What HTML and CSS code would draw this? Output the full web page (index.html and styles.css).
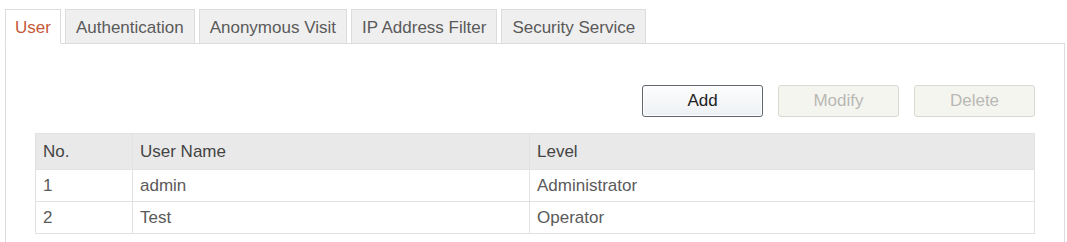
FILE: index.html
```html
<!DOCTYPE html>
<html lang="en">
<head>
  <meta charset="UTF-8" />
  <title>User Management</title>
  <link rel="stylesheet" href="styles.css">
</head>
<body>
  <div class="tabs">
    <div class="tab active">User</div>
    <div class="tab">Authentication</div>
    <div class="tab">Anonymous Visit</div>
    <div class="tab">IP Address Filter</div>
    <div class="tab">Security Service</div>
  </div>
  <div class="panel">
    <div class="toolbar">
      <button class="btn">Add</button>
      <button class="btn" disabled>Modify</button>
      <button class="btn" disabled>Delete</button>
    </div>
    <table class="users">
      <thead>
        <tr><th class="col-no">No.</th><th class="col-name">User Name</th><th>Level</th></tr>
      </thead>
      <tbody>
        <tr><td>1</td><td>admin</td><td>Administrator</td></tr>
        <tr><td>2</td><td>Test</td><td>Operator</td></tr>
      </tbody>
    </table>
  </div>
</body>
</html>
```

FILE: styles.css
```css
html, body {
  margin: 0;
  padding: 0;
  background: #fff;
  font-family: "Liberation Sans", Arial, sans-serif;
  font-size: 17px;
  color: #555;
  overflow: hidden;
}
.tabs {
  display: flex;
  gap: 4px;
  padding: 9px 0 0 5px;
  position: relative;
  z-index: 1;
}
.tab {
  height: 33px;
  line-height: 35px;
  padding: 0 10px;
  background: #efefef;
  border: 1px solid #dcdcdc;
  color: #5a5a5a;
  margin-bottom: -1px;
}
.tab.active {
  background: #fff;
  border-bottom-color: #fff;
  color: #c4583a;
  padding: 0 9px;
}
.panel {
  margin-left: 5px;
  width: 1058px;
  height: 200px;
  border: 1px solid #dcdcdc;
}
.toolbar {
  display: flex;
  justify-content: flex-end;
  gap: 15px;
  padding: 41px 29px 0 0;
}
.btn {
  width: 121px;
  height: 32px;
  font-family: inherit;
  font-size: 17px;
  color: #222;
  border: 1px solid #5f6670;
  border-radius: 3px;
  background: linear-gradient(to bottom, #fdfdfd 0%, #eef1f4 100%);
  box-shadow: inset 0 0 0 1px #fff;
  padding: 0;
}
.btn:disabled {
  color: #b8b8b4;
  border-color: #dadad4;
  background: #f5f5f0;
  box-shadow: none;
}
.users {
  margin: 16px 0 0 29px;
  width: 1000px;
  border-collapse: collapse;
  border: 1px solid #e2e2e2;
}
.users th, .users td {
  text-align: left;
  font-weight: normal;
  padding: 0 7px;
  border: 1px solid #e2e2e2;
}
.users th {
  background: #e9e9e9;
  color: #444;
  height: 35px;
}
.users td {
  height: 31px;
  color: #5a5a5a;
}
.col-no { width: 82px; }
.col-name { width: 382px; }
```
